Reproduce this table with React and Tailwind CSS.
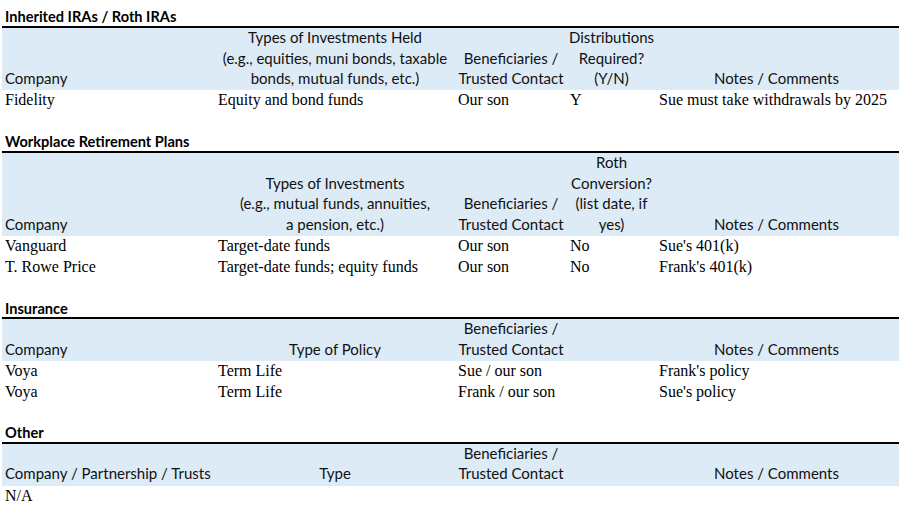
const cols = 'grid grid-cols-[213px_240px_112px_89px_241px]'

const sections = [
  {
    title: 'Inherited IRAs / Roth IRAs',
    lines: 3,
    head: [
      ['Company'],
      ['Types of Investments Held', '(e.g., equities, muni bonds, taxable', 'bonds, mutual funds, etc.)'],
      ['Beneficiaries /', 'Trusted Contact'],
      ['Distributions', 'Required?', '(Y/N)'],
      ['Notes / Comments'],
    ],
    rows: [['Fidelity', 'Equity and bond funds', 'Our son', 'Y', 'Sue must take withdrawals by 2025']],
  },
  {
    title: 'Workplace Retirement Plans',
    lines: 4,
    head: [
      ['Company'],
      ['Types of Investments', '(e.g., mutual funds, annuities,', 'a pension, etc.)'],
      ['Beneficiaries /', 'Trusted Contact'],
      ['Roth', 'Conversion?', '(list date, if', 'yes)'],
      ['Notes / Comments'],
    ],
    rows: [
      ['Vanguard', 'Target-date funds', 'Our son', 'No', "Sue's 401(k)"],
      ['T. Rowe Price', 'Target-date funds; equity funds', 'Our son', 'No', "Frank's 401(k)"],
    ],
  },
  {
    title: 'Insurance',
    lines: 2,
    head: [['Company'], ['Type of Policy'], ['Beneficiaries /', 'Trusted Contact'], [], ['Notes / Comments']],
    rows: [
      ['Voya', 'Term Life', 'Sue / our son', '', "Frank's policy"],
      ['Voya', 'Term Life', 'Frank / our son', '', "Sue's policy"],
    ],
  },
  {
    title: 'Other',
    lines: 2,
    head: [['Company / Partnership / Trusts'], ['Type'], ['Beneficiaries /', 'Trusted Contact'], [], ['Notes / Comments']],
    rows: [['N/A', '', '', '', '']],
    last: true,
  },
]

function Section({ title, lines, head, rows, last }) {
  return (
    <div>
      <div className="h-[20.8px] border-b-2 border-black flex items-end pl-[3px] pb-[1px] font-bold text-[14.6px] text-black font-['Lato',sans-serif] leading-none">
        {title}
      </div>
      <div className={`${cols} bg-[#ddebf7] font-['Lato',sans-serif] text-[15px] text-[#111]`}>
        {head.map((cell, i) => (
          <div
            key={i}
            className={`flex flex-col justify-end pb-[1.5px] leading-[20.6px] ${i === 0 ? 'items-start pl-[3px]' : 'items-center'}`}
            style={{ height: lines * 20.8 }}
          >
            {cell.map((t) => (
              <span key={t} className="whitespace-nowrap">{t}</span>
            ))}
          </div>
        ))}
      </div>
      {rows.map((r, ri) => (
        <div key={ri} className={`${cols} h-[20.8px] font-['Liberation_Serif',serif] text-[16px] text-black`}>
          {r.map((t, i) => (
            <div key={i} className="pl-[3px] leading-[20.8px] whitespace-nowrap">{t}</div>
          ))}
        </div>
      ))}
      {!last && <div className="h-[20.8px]" />}
    </div>
  )
}

export default function App() {
  return (
    <div className="w-[899px] h-[505px] bg-white pt-[7.2px] pl-[2px] overflow-hidden">
      {sections.map((s) => (
        <Section key={s.title} {...s} />
      ))}
    </div>
  )
}
